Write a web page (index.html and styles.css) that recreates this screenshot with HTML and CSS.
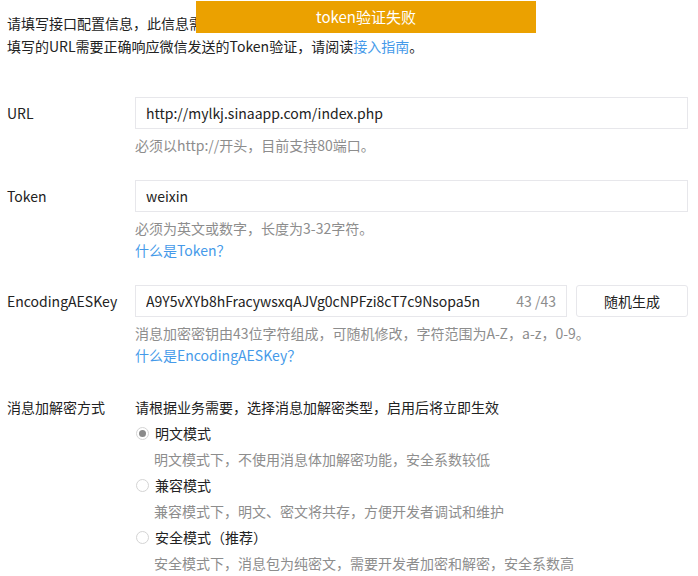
FILE: index.html
```html
<!DOCTYPE html>
<html lang="zh-CN">
<head>
  <meta charset="UTF-8">
  <title>服务器配置</title>
  <link rel="stylesheet" href="styles.css">
</head>
<body>
  <!-- Error toast -->
  <div class="toast">token验证失败</div>

  <div class="page">
    <div class="intro">
      <p>请填写接口配置信息，此信息需要你拥有自己的服务器资源。</p>
      <p>填写的URL需要正确响应微信发送的Token验证，请阅读<a href="#" class="link">接入指南</a>。</p>
    </div>

    <div class="form-row">
      <label class="form-label">URL</label>
      <div class="form-field">
        <div class="input-box">
          <input class="input" type="text" value="http://mylkj.sinaapp.com/index.php">
        </div>
        <p class="tips">必须以http://开头，目前支持80端口。</p>
      </div>
    </div>

    <div class="form-row">
      <label class="form-label">Token</label>
      <div class="form-field">
        <div class="input-box">
          <input class="input" type="text" value="weixin">
        </div>
        <p class="tips">必须为英文或数字，长度为3-32字符。</p>
        <p class="tips"><a href="#" class="link">什么是Token？</a></p>
      </div>
    </div>

    <div class="form-row">
      <label class="form-label">EncodingAESKey</label>
      <div class="form-field">
        <div class="field-inline">
          <div class="input-box input-box-counter">
            <input class="input" type="text" value="A9Y5vXYb8hFracywsxqAJVg0cNPFzi8cT7c9Nsopa5n">
            <span class="counter">43 /43</span>
          </div>
          <button class="btn" type="button">随机生成</button>
        </div>
        <p class="tips">消息加密密钥由43位字符组成，可随机修改，字符范围为A-Z，a-z，0-9。</p>
        <p class="tips"><a href="#" class="link">什么是EncodingAESKey？</a></p>
      </div>
    </div>

    <div class="form-row form-row-mode">
      <label class="form-label">消息加解密方式</label>
      <div class="form-field">
        <p class="mode-title">请根据业务需要，选择消息加解密类型，启用后将立即生效</p>
        <label class="radio">
          <span class="radio-icon checked"></span>明文模式
        </label>
        <p class="mode-desc">明文模式下，不使用消息体加解密功能，安全系数较低</p>
        <label class="radio">
          <span class="radio-icon"></span>兼容模式
        </label>
        <p class="mode-desc">兼容模式下，明文、密文将共存，方便开发者调试和维护</p>
        <label class="radio">
          <span class="radio-icon"></span>安全模式（推荐）
        </label>
        <p class="mode-desc">安全模式下，消息包为纯密文，需要开发者加密和解密，安全系数高</p>
      </div>
    </div>
  </div>
</body>
</html>
```

FILE: styles.css
```css
:root {
  --color-text: #222222;
  --color-tips: #8d8d8d;
  --color-link: #459ae9;
  --color-border: #e7e7eb;
  --color-warn: #eba100;

  --font-main: "Noto Sans CJK SC", "Noto Sans", sans-serif;
}

* {
  margin: 0;
  padding: 0;
  box-sizing: border-box;
}

body {
  font-family: var(--font-main);
  font-size: 14px;
  color: var(--color-text);
  background: #ffffff;
}

.toast {
  position: absolute;
  top: 1px;
  left: 196px;
  width: 340px;
  height: 32px;
  line-height: 32px;
  background-color: var(--color-warn);
  color: #ffffff;
  font-size: 15px;
  text-align: center;
  z-index: 100;
}

.page {
  padding: 12px 10px 0 7px;
}

.intro {
  line-height: 23px;
  margin-bottom: 39px;
}

.link {
  color: var(--color-link);
  text-decoration: none;
}

.form-row {
  display: flex;
  margin-bottom: 24px;
}

.form-label {
  width: 128px;
  flex-shrink: 0;
  line-height: 32px;
}

.form-field {
  flex: 1;
}

.input-box {
  display: flex;
  align-items: center;
  height: 32px;
  border: 1px solid var(--color-border);
  padding: 0 10px;
}

.input {
  flex: 1;
  min-width: 0;
  border: none;
  outline: none;
  font: inherit;
  color: var(--color-text);
  background: transparent;
}

.counter {
  color: var(--color-tips);
  margin-left: 10px;
}

.field-inline {
  display: flex;
  gap: 9px;
}

.input-box-counter {
  width: 432px;
}

.btn {
  width: 112px;
  height: 32px;
  border: 1px solid var(--color-border);
  border-radius: 3px;
  background: #ffffff;
  font: inherit;
  color: var(--color-text);
  cursor: pointer;
}

.tips {
  color: var(--color-tips);
  line-height: 22px;
}

.tips:first-of-type {
  margin-top: 5px;
}

.form-row-mode {
  margin-top: 28px;
}

.form-row-mode .form-label,
.mode-title,
.mode-desc {
  height: 26px;
  line-height: 26px;
}

.radio {
  display: flex;
  align-items: center;
  height: 26px;
}

.radio-icon {
  width: 13px;
  height: 13px;
  margin: 0 6px 0 1px;
  border: 1px solid #d4d4d4;
  border-radius: 50%;
  position: relative;
}

.radio-icon.checked::after {
  content: '';
  position: absolute;
  top: 2px;
  left: 2px;
  width: 7px;
  height: 7px;
  border-radius: 50%;
  background-color: #8a8a8a;
}

.mode-desc {
  color: var(--color-tips);
  padding-left: 19px;
}
```
